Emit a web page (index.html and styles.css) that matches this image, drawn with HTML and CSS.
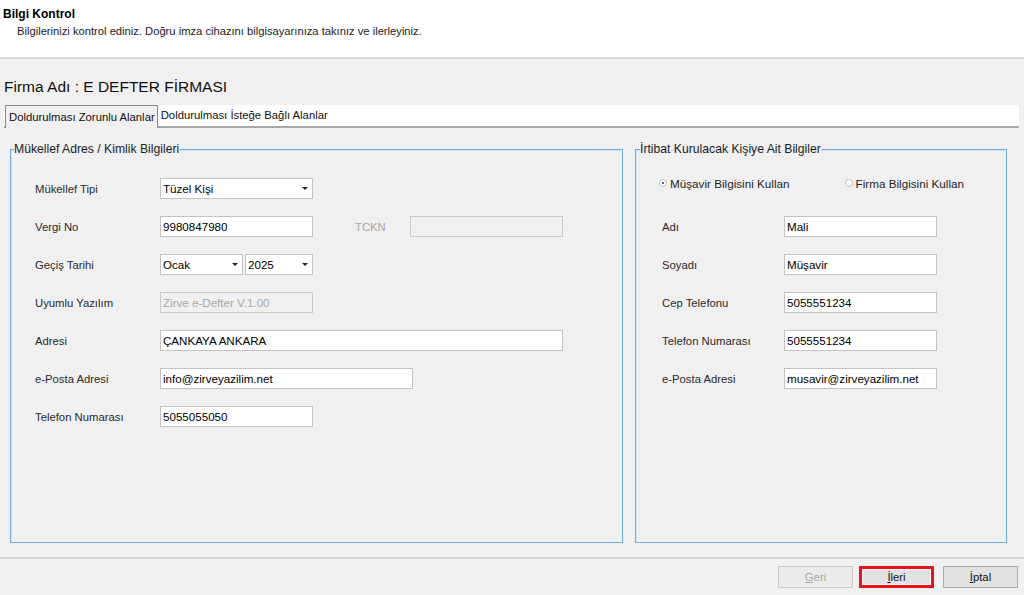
FILE: index.html
```html
<!DOCTYPE html>
<html lang="tr">
<head>
<meta charset="utf-8">
<title>Bilgi Kontrol</title>
<link rel="stylesheet" href="styles.css">
</head>
<body>
<div class="window">
  <header class="header">
    <h1 class="header-title">Bilgi Kontrol</h1>
    <p class="header-sub">Bilgilerinizi kontrol ediniz. Doğru imza cihazını bilgisayarınıza takınız ve ilerleyiniz.</p>
  </header>

  <div class="firm-title">Firma Adı : E DEFTER FİRMASI</div>

  <div class="tabs">
    <div class="tab active">Doldurulması Zorunlu Alanlar</div>
    <div class="tab">Doldurulması İsteğe Bağlı Alanlar</div>
  </div>

  <div class="panels">
    <fieldset class="group group-left">
      <legend class="legend">Mükellef Adres / Kimlik Bilgileri</legend>
      <div class="form">
        <div class="row">
          <span class="label">Mükellef Tipi</span>
          <div class="field select w153"><span class="val">Tüzel Kişi</span><span class="arrow"></span></div>
        </div>
        <div class="row">
          <span class="label">Vergi No</span>
          <div class="field w153"><span class="val">9980847980</span></div>
          <span class="label disabled tckn">TCKN</span>
          <div class="field disabled w153"></div>
        </div>
        <div class="row">
          <span class="label">Geçiş Tarihi</span>
          <div class="field select w83"><span class="val">Ocak</span><span class="arrow"></span></div>
          <div class="field select w68 gap2"><span class="val">2025</span><span class="arrow"></span></div>
        </div>
        <div class="row">
          <span class="label">Uyumlu Yazılım</span>
          <div class="field disabled w153"><span class="val">Zirve e-Defter V.1.00</span></div>
        </div>
        <div class="row">
          <span class="label">Adresi</span>
          <div class="field w403"><span class="val">ÇANKAYA ANKARA</span></div>
        </div>
        <div class="row">
          <span class="label">e-Posta Adresi</span>
          <div class="field w253"><span class="val">info@zirveyazilim.net</span></div>
        </div>
        <div class="row">
          <span class="label">Telefon Numarası</span>
          <div class="field w153"><span class="val">5055055050</span></div>
        </div>
      </div>
    </fieldset>

    <fieldset class="group group-right">
      <legend class="legend">İrtibat Kurulacak Kişiye Ait Bilgiler</legend>
      <div class="radios">
        <label class="radio"><span class="dot checked"></span>Müşavir Bilgisini Kullan</label>
        <label class="radio second"><span class="dot"></span>Firma Bilgisini Kullan</label>
      </div>
      <div class="form form-right">
        <div class="row">
          <span class="label">Adı</span>
          <div class="field w153"><span class="val">Mali</span></div>
        </div>
        <div class="row">
          <span class="label">Soyadı</span>
          <div class="field w153"><span class="val">Müşavir</span></div>
        </div>
        <div class="row">
          <span class="label">Cep Telefonu</span>
          <div class="field w153"><span class="val">5055551234</span></div>
        </div>
        <div class="row">
          <span class="label">Telefon Numarası</span>
          <div class="field w153"><span class="val">5055551234</span></div>
        </div>
        <div class="row">
          <span class="label">e-Posta Adresi</span>
          <div class="field w153"><span class="val">musavir@zirveyazilim.net</span></div>
        </div>
      </div>
    </fieldset>
  </div>

  <div class="footer">
    <button class="btn disabled" type="button"><u>G</u>eri</button>
    <button class="btn primary" type="button"><u>İ</u>leri</button>
    <button class="btn" type="button"><u>İ</u>ptal</button>
  </div>
</div>
</body>
</html>
```

FILE: styles.css
```css
* { box-sizing: border-box; }

html, body {
  margin: 0;
  padding: 0;
}

body {
  background: #f0f0f0;
  font-family: "Liberation Sans", Arial, sans-serif;
  font-size: 11.3px;
  color: #1e1e1e;
  width: 1024px;
  height: 595px;
  overflow: hidden;
}

.window {
  width: 1024px;
  height: 595px;
}

.header {
  background: #ffffff;
  height: 59px;
  border-bottom: 2px solid #dadada;
  padding: 7px 0 0 3px;
}

.header-title {
  margin: 0;
  font-size: 12px;
  font-weight: bold;
  line-height: 14px;
  color: #000;
}

.header-sub {
  margin: 3px 0 0 14px;
  line-height: 14px;
  font-size: 11.2px;
  color: #1a1a1a;
}

.firm-title {
  margin-top: 18px;
  padding-left: 4px;
  font-size: 15.5px;
  line-height: 20px;
  color: #111;
}

.tabs {
  margin: 8px 5px 0 4px;
  height: 23px;
  background: #ffffff;
  border-bottom: 2px solid #a8a8a8;
  display: flex;
  align-items: flex-end;
}

.tab {
  line-height: 20px;
  height: 21px;
  padding: 0 3px 0 3px;
  color: #111;
}

.tab.active {
  margin-left: 1px;
  height: 23px;
  margin-bottom: -2px;
  background: #f0f0f0;
  border: 1px solid #8a8a8a;
  border-bottom: none;
  line-height: 22px;
  padding: 0 2px 0 3px;
}

.panels {
  display: flex;
  gap: 12px;
  margin-top: 14px;
  padding-left: 10px;
}

.group {
  margin: 0;
  padding: 0;
  min-width: 0;
  height: 401px;
  border: 1px solid #6eaee6;
  box-shadow: inset 1px 1px 0 #cfe3f5;
}

.group-left { width: 613px; }
.group-right { width: 372px; }

.legend {
  padding: 0 1px 0 0;
  margin-left: 3px;
  line-height: 14px;
  font-size: 12.2px;
  color: #1e1e1e;
}

.group-right .legend {
  margin-left: 4px;
}

.form {
  display: flex;
  flex-direction: column;
  gap: 17px;
  padding: 22px 0 0 24px;
}

.form-right {
  padding: 26px 0 0 26px;
}

.row {
  display: flex;
  align-items: center;
  height: 21px;
}

.label {
  width: 125px;
  flex: none;
  color: #2a2a2a;
}

.form-right .label {
  width: 122px;
}

.label.disabled {
  color: #a6a6a6;
}

.label.tckn {
  width: 55px;
  margin-left: 42px;
}

.field {
  position: relative;
  height: 21px;
  background: #ffffff;
  border: 1px solid #c3c3c3;
  display: flex;
  align-items: center;
  padding-left: 2px;
  color: #000;
  font-size: 11.6px;
  white-space: nowrap;
  flex: none;
}

.field.disabled {
  background: #f0f0f0;
  border-color: #cacaca;
  color: #a8a8a8;
}

.w153 { width: 153px; }
.w83 { width: 83px; }
.w68 { width: 68px; }
.w253 { width: 253px; }
.w403 { width: 403px; }
.gap2 { margin-left: 2px; }

.arrow {
  position: absolute;
  right: 4px;
  top: 8px;
  width: 0;
  height: 0;
  border-left: 3px solid transparent;
  border-right: 3px solid transparent;
  border-top: 3px solid #222;
}

.radios {
  display: flex;
  align-items: center;
  height: 34px;
  padding: 20px 0 0 23px;
}

.radio {
  display: flex;
  align-items: center;
  gap: 3px;
  font-size: 11.7px;
  color: #1e1e1e;
}

.radio.second {
  margin-left: 55px;
}

.dot {
  width: 8px;
  height: 8px;
  border-radius: 50%;
  border: 1px solid #bdbdbd;
  background: #fff;
  position: relative;
}

.dot.checked::after {
  content: "";
  position: absolute;
  left: 2px;
  top: 2px;
  width: 2px;
  height: 2px;
  border-radius: 50%;
  background: #333;
}

.footer {
  margin-top: 14px;
  border-top: 2px solid #d6d6d6;
  display: flex;
  justify-content: flex-end;
  padding: 7px 6px 0 0;
}

.btn {
  width: 75px;
  height: 22px;
  margin: 0;
  padding: 0;
  font-family: inherit;
  font-size: 11.3px;
  background: #e1e1e1;
  border: 1px solid #adadad;
  color: #111;
  border-radius: 0;
}

.btn u { text-decoration: underline; }

.btn.disabled {
  background: #ebebeb;
  border-color: #c9c9c9;
  color: #a6a6a6;
}

.btn.primary {
  margin-left: 6px;
  border: 3px solid #e8141a;
  box-shadow: inset 0 0 0 1px #ffffff;
}

.btn + .btn:not(.primary) {
  margin-left: 9px;
}
```
